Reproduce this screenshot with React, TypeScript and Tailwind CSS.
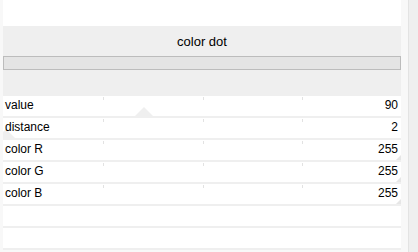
const rows = [
  { label: "value", value: "90", mid: true },
  { label: "distance", value: "2", left: true },
  { label: "color R", value: "255", corner: true },
  { label: "color G", value: "255", corner: true },
  { label: "color B", value: "255", corner: true },
];

function Ticks() {
  return (
    <>
      <span className="absolute top-px left-[100px] w-px h-[3px] bg-[#e2e2e2]" />
      <span className="absolute top-px left-[200px] w-px h-[3px] bg-[#e2e2e2]" />
      <span className="absolute top-px left-[299px] w-px h-[3px] bg-[#e2e2e2]" />
    </>
  );
}

export default function App() {
  return (
    <div className="flex w-[418px] h-[252px] bg-white font-['Liberation_Sans',Arial,sans-serif] text-black overflow-hidden">
      <div className="w-[3px] shrink-0 bg-[#f8f8f8]" />

      <div className="w-[398px] shrink-0 flex flex-col">
        <div className="h-[26px] bg-white" />

        {/* header */}
        <div className="h-[70px] bg-[#efefef] flex flex-col">
          <div className="h-[30px] flex items-center justify-center text-[13px] leading-none">color dot</div>
          <div className="h-[14px] border border-[#bcbcbc] bg-[#e4e4e4]" />
        </div>

        {/* property rows */}
        <div className="flex flex-col gap-[2px] bg-[#efefef] pb-[2px]">
          {rows.map((r) => (
            <div key={r.label} className="relative h-[20px] bg-white overflow-hidden flex items-center justify-between pl-[2px] pr-[3px] text-[12px] leading-none">
              <Ticks />
              {r.mid && (
                <svg className="absolute left-[132px] bottom-0" width="18" height="9" viewBox="0 0 18 9">
                  <polygon points="0,9 9,0 18,9" fill="#efefef" />
                </svg>
              )}
              {r.left && (
                <svg className="absolute -left-[6px] bottom-0" width="18" height="9" viewBox="0 0 18 9">
                  <polygon points="0,9 9,0 18,9" fill="#efefef" />
                </svg>
              )}
              {r.corner && (
                <svg className="absolute right-0 bottom-0" width="5" height="5" viewBox="0 0 5 5">
                  <polygon points="5,0 5,5 0,5" fill="#e6e6e6" />
                </svg>
              )}
              <span className="relative -mt-[2px]">{r.label}</span>
              <span className="relative -mt-[2px]">{r.value}</span>
            </div>
          ))}
          <div className="h-[20px] bg-white" />
          <div className="h-[20px] bg-white" />
        </div>
        <div className="flex-1 bg-[#f8f8f8]" />
      </div>

      <div className="w-[7px] shrink-0 bg-[#f8f8f8]" />
      <div className="w-px shrink-0 bg-[#e3e3e3]" />
      <div className="flex-1 bg-[#efefef]" />
    </div>
  );
}
